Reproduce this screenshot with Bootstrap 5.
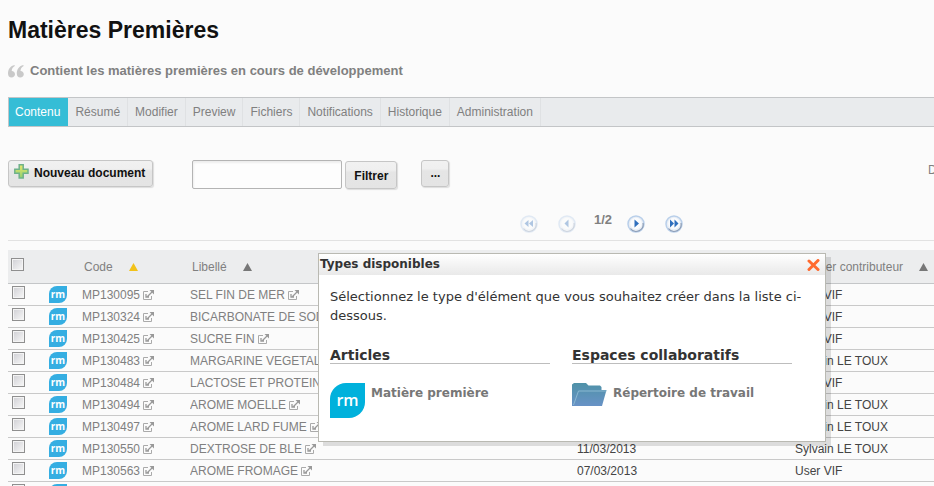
<!DOCTYPE html>
<html lang="fr">
<head>
<meta charset="utf-8">
<meta name="viewport" content="width=device-width, initial-scale=1">
<title>Matières Premières</title>
<link rel="stylesheet" href="https://cdn.jsdelivr.net/npm/bootstrap@5.3.0/dist/css/bootstrap.min.css">
<style>
body{font:12px/21px "Liberation Sans",Arial,sans-serif;color:#808080;background:#fbfbfb;overflow:hidden}
svg{display:block;flex:none}
.sheet{padding-left:8px}
.page-title{font-size:23px;line-height:30px;font-weight:700;color:#111;padding-top:15px}
.page-desc{font-size:13px;line-height:20px;font-weight:700;gap:6px;margin-top:16px}
.tabs{background:#e9ebed;border:1px solid #c3c5c7;border-right:0;margin-top:16px}
.tabs .nav-link{color:#808080;font-size:12px;line-height:28px;padding:0 7px;border-right:1px solid #dfe1e3}
.tabs .nav-link.active{background:#35bdd6;color:#fff;border-color:#35bdd6;padding-left:6px}
.tools{margin-top:33px;height:30px}
.tool-btn{border:1px solid #c6c6c6;border-radius:3px;background:linear-gradient(#f1f1f1 0,#efefef 30%,#e5e5e5 40%,#e4e4e4);box-shadow:1px 1px 1px #ddd;font-size:12px;font-weight:700;line-height:18px;color:#111;padding:3px 8px 5px;height:27px}
.tool-btn.new-doc{padding:3px 7px 5px 5px;gap:5px;margin-right:39px}
.tool-btn.filter{margin:1px 24px 0 3px;height:28px;padding:5px 8px}
.filter-box{width:150px;height:29px;border:1px solid #b4b4b4;border-radius:2px;background:#fdfdfd;font-size:12px;padding:0 6px;box-shadow:inset 1px 2px 2px #eee}
.detail-link{width:6px;overflow:hidden;color:#808080;text-decoration:none;white-space:nowrap}
.pager{height:51px;padding:20px 0 0 512px;border-bottom:1px solid #e2e2e2}
.pager button{border:0;background:none;padding:0;margin-top:5px}
.pager .dimmed{opacity:.4}
.pager .count{font-size:13px;font-weight:700;line-height:20px;margin:0 15px 0 18px}
.docs{table-layout:fixed;width:100%;margin-top:9px;border-collapse:separate;border-spacing:0}
.docs th{background:#ecedee;height:34px;font-weight:400;border-bottom:1px solid #c4c6c8;padding:1px 0 0 2px;white-space:nowrap}
.docs td{height:22px;line-height:19px;padding:2px 0 0;border-bottom:1px solid #c9c9c9;white-space:nowrap;overflow:hidden;vertical-align:top}
.docs td:nth-child(5),.docs td:nth-child(6){color:#444}
.docs a{color:inherit;text-decoration:none;display:flex;align-items:center;gap:3px}
.docs .c-tick{width:41px}.docs .c-icon{width:33px}.docs .c-code{width:108px}.docs .c-name{width:387px}.docs .c-date{width:218px}
.tick{appearance:none;display:block;width:13px;height:13px;margin:0 0 0 4px;border:1px solid #8f8f8f;background:linear-gradient(135deg,#cfcfd4,#f8f8f8);box-shadow:inset 0 0 0 1px #f4f4f4;border-radius:0}
th .tick{margin:-5px 0 0 3px;margin-left:1px}
.types{left:318px;top:253px;width:508px;background:#fff;border:1px solid #b9b9b2;box-shadow:5px 4px 0 rgba(0,0,0,.12);font-family:"DejaVu Sans",Verdana,sans-serif;color:#333;min-height:189px}
.types-head{height:21px;background:linear-gradient(#fff,#e9e9e9);padding:0 5px 0 1px}
.types-head h2{font-size:12px;line-height:21px;font-weight:700;margin:0}
.types-head button{border:0;background:none;padding:0}
.types-body{padding:12px 11px 21px}
.types-body p{font-size:13px;line-height:19px;margin:0 0 19px}
.type-groups{display:grid;grid-template-columns:220px 220px;gap:22px}
.type-groups h3{font-size:14px;line-height:20px;font-weight:700;margin:0 0 19px;padding-top:1px;height:20px;border-bottom:1px solid #bdbdbd}
.type-groups a{color:#777;font-size:12px;line-height:20px;font-weight:700;text-decoration:none;gap:6px}
</style>
<script src="https://cdn.jsdelivr.net/npm/bootstrap@5.3.0/dist/js/bootstrap.bundle.min.js"></script>
</head>
<body>
<svg width="0" height="0" class="position-absolute" aria-hidden="true">
  <defs>
    <linearGradient id="plusFill" x2="0" y2="1"><stop stop-color="#e9e86c"/><stop offset="1" stop-color="#8fd070"/></linearGradient>
    <linearGradient id="folderFill" x2="0" y2="1"><stop stop-color="#4f92a8"/><stop offset="1" stop-color="#6892c6"/></linearGradient>
    <symbol id="leaf" viewBox="0 0 35 35"><path d="M16 0H35V19A16 16 0 0 1 19 35H0V16A16 16 0 0 1 16 0Z"/></symbol>
    <symbol id="open" viewBox="0 0 11 11"><path d="M5 1.500H.5V9.500H8.500V6" fill="none" stroke="#aaa"/><path d="M6.500 0H11V4.500Z" fill="#999"/><path d="M9 2 4.500 6.500M3 4V7H6" fill="none" stroke="#999" stroke-width="1.300"/></symbol>
    <symbol id="disc" viewBox="0 0 18 18"><circle cx="9" cy="9" r="8" fill="#e9eef5" stroke="#b9cfea" stroke-width="1.500"/><path d="M3.500 13.500A7 7 0 0 0 16 8" fill="none" stroke="#8d9db5" stroke-width="1.200"/><circle cx="9" cy="8.500" r="5.800" fill="#fafbfd"/></symbol>
  </defs>
</svg>
<main class="sheet position-relative">
  <h1 class="page-title mb-0">Matières Premières</h1>
  <div class="page-desc d-flex align-items-center">
    <svg width="16" height="13" viewBox="0 0 16 13" fill="#c9c9c9"><path id="q" d="M6.500 0C2.500 1 0 4 0 8.500 0 11 1.300 12.500 3.500 12.500 5.500 12.500 7 11 7 9.200 7 7.300 5.700 6 3.700 6 3.800 3.700 4.800 2 6.800 1Z"/><use href="#q" x="8.800"/></svg>
    <span>Contient les matières premières en cours de développement</span>
  </div>
  <nav class="nav tabs flex-nowrap">
    <a class="nav-link active" href="#">Contenu</a>
    <a class="nav-link" href="#">Résumé</a>
    <a class="nav-link" href="#">Modifier</a>
    <a class="nav-link" href="#">Preview</a>
    <a class="nav-link" href="#">Fichiers</a>
    <a class="nav-link" href="#">Notifications</a>
    <a class="nav-link" href="#">Historique</a>
    <a class="nav-link" href="#">Administration</a>
  </nav>
  <div class="tools d-flex align-items-start">
    <button type="button" class="tool-btn new-doc d-flex">
      <svg width="15" height="15" viewBox="0 0 15 15"><path d="M5.200.8H9.200V5.300H14V9.300H9.200V14H5.200V9.300H.8V5.300H5.200Z" fill="url(#plusFill)" stroke="#6fb28a" stroke-width="1.500"/></svg>
      <span>Nouveau document</span>
    </button>
    <input class="filter-box" type="text" aria-label="Filtrer les documents">
    <button type="button" class="tool-btn filter">Filtrer</button>
    <button type="button" class="tool-btn">...</button>
    <a class="detail-link ms-auto" href="#">D</a>
  </div>
  <div class="pager d-flex align-items-start">
    <button type="button" class="dimmed" aria-label="Première page"><svg width="18" height="18"><use href="#disc"/><path d="M8.500 5V12L4.500 8.500ZM13 5V12L9 8.500Z" fill="#3f78bd"/></svg></button>
    <button type="button" class="dimmed ms-3 ps-1" aria-label="Page précédente"><svg width="18" height="18"><use href="#disc"/><path d="M10.500 4.500V12.500L6.500 8.500Z" fill="#3f78bd"/></svg></button>
    <span class="count">1/2</span>
    <button type="button" aria-label="Page suivante"><svg width="18" height="18"><use href="#disc"/><path d="M7.500 4.500V12.500L12 8.500Z" fill="#2f6fbd"/></svg></button>
    <button type="button" class="ms-3 ps-1" aria-label="Dernière page"><svg width="18" height="18"><use href="#disc"/><path d="M5 4.500V12.500L9 8.500ZM9.500 4.500V12.500L13.500 8.500Z" fill="#2f6fbd"/></svg></button>
  </div>
  <table class="docs">
    <colgroup><col class="c-tick"><col class="c-icon"><col class="c-code"><col class="c-name"><col class="c-date"><col></colgroup>
    <thead><tr>
      <th><input type="checkbox" class="tick" aria-label="Tout sélectionner"></th><th></th>
      <th><span class="d-flex align-items-center gap-3">Code <svg width="9" height="8"><path d="M4.500 0 9 8H0Z" fill="#f2c21a"/></svg></span></th>
      <th><span class="d-flex align-items-center gap-3">Libellé <svg width="9" height="8"><path d="M4.500 0 9 8H0Z" fill="#777"/></svg></span></th>
      <th></th>
      <th><span class="d-flex align-items-center gap-3">Dernier contributeur <svg width="9" height="8"><path d="M4.500 0 9 8H0Z" fill="#777"/></svg></span></th>
    </tr></thead>
    <tbody id="rows"></tbody>
  </table>
</main>
<section class="types position-absolute" role="dialog" aria-labelledby="typesTitle">
  <div class="types-head d-flex justify-content-between align-items-center">
    <h2 id="typesTitle">Types disponibles</h2>
    <button type="button" aria-label="Fermer"><svg width="13" height="12" viewBox="0 0 13 12"><path d="M2 2 11 10.500M11 1.500 2 10.500" stroke="#ff6a2f" stroke-width="3" stroke-linecap="round"/></svg></button>
  </div>
  <div class="types-body">
    <p>Sélectionnez le type d'élément que vous souhaitez créer dans la liste ci-dessous.</p>
    <div class="type-groups">
      <div>
        <h3>Articles</h3>
        <a class="d-flex" href="#"><svg width="35" height="35" viewBox="0 0 35 35"><use href="#leaf" fill="#00b1dc"/><text x="17.500" y="23" text-anchor="middle" font-family="Open Sans,sans-serif" font-size="16" font-weight="600" fill="#fff">rm</text></svg>Matière première</a>
      </div>
      <div>
        <h3>Espaces collaboratifs</h3>
        <a class="d-flex" href="#"><svg width="35" height="23" viewBox="0 0 35 23"><path d="M0 1.500 2 0H14L16.500 2.500H28L29.500 4V7H34.500L30 23H0Z" fill="url(#folderFill)"/><path d="M1.500 22 6.500 8H34.300" fill="none" stroke="#8ab8d2"/></svg>Répertoire de travail</a>
      </div>
    </div>
  </div>
</section>
<script>
const docs = [
  ["MP130095", "SEL FIN DE MER", "", "User VIF"],
  ["MP130324", "BICARBONATE DE SODIUM", "", "User VIF"],
  ["MP130425", "SUCRE FIN", "", "User VIF"],
  ["MP130483", "MARGARINE VEGETALE", "", "Sylvain LE TOUX"],
  ["MP130484", "LACTOSE ET PROTEINES", "", "User VIF"],
  ["MP130494", "AROME MOELLE", "", "Sylvain LE TOUX"],
  ["MP130497", "AROME LARD FUME", "", "Sylvain LE TOUX"],
  ["MP130550", "DEXTROSE DE BLE", "11/03/2013", "Sylvain LE TOUX"],
  ["MP130563", "AROME FROMAGE", "07/03/2013", "User VIF"],
  ["", "", "", ""]
];
const link = t => t && `<a href="#">${t}<svg width="11" height="11"><use href="#open"/></svg></a>`;
document.getElementById("rows").innerHTML = docs.map(([code, name, date, user]) => `<tr>
  <td><input type="checkbox" class="tick" aria-label="Sélectionner ${code}"></td>
  <td><svg width="18" height="17" viewBox="0 0 18 17"><path d="M8 0H18V9A8 8 0 0 1 10 17H0V8A8 8 0 0 1 8 0Z" fill="#35aee2"/>${code && '<text x="9" y="12" text-anchor="middle" font-family="Open Sans,sans-serif" font-size="10" font-weight="700" fill="#fff">rm</text>'}</svg></td>
  <td>${link(code)}</td><td>${link(name)}</td><td>${date}</td><td>${user}</td></tr>`).join("");
</script>
</body>
</html>
